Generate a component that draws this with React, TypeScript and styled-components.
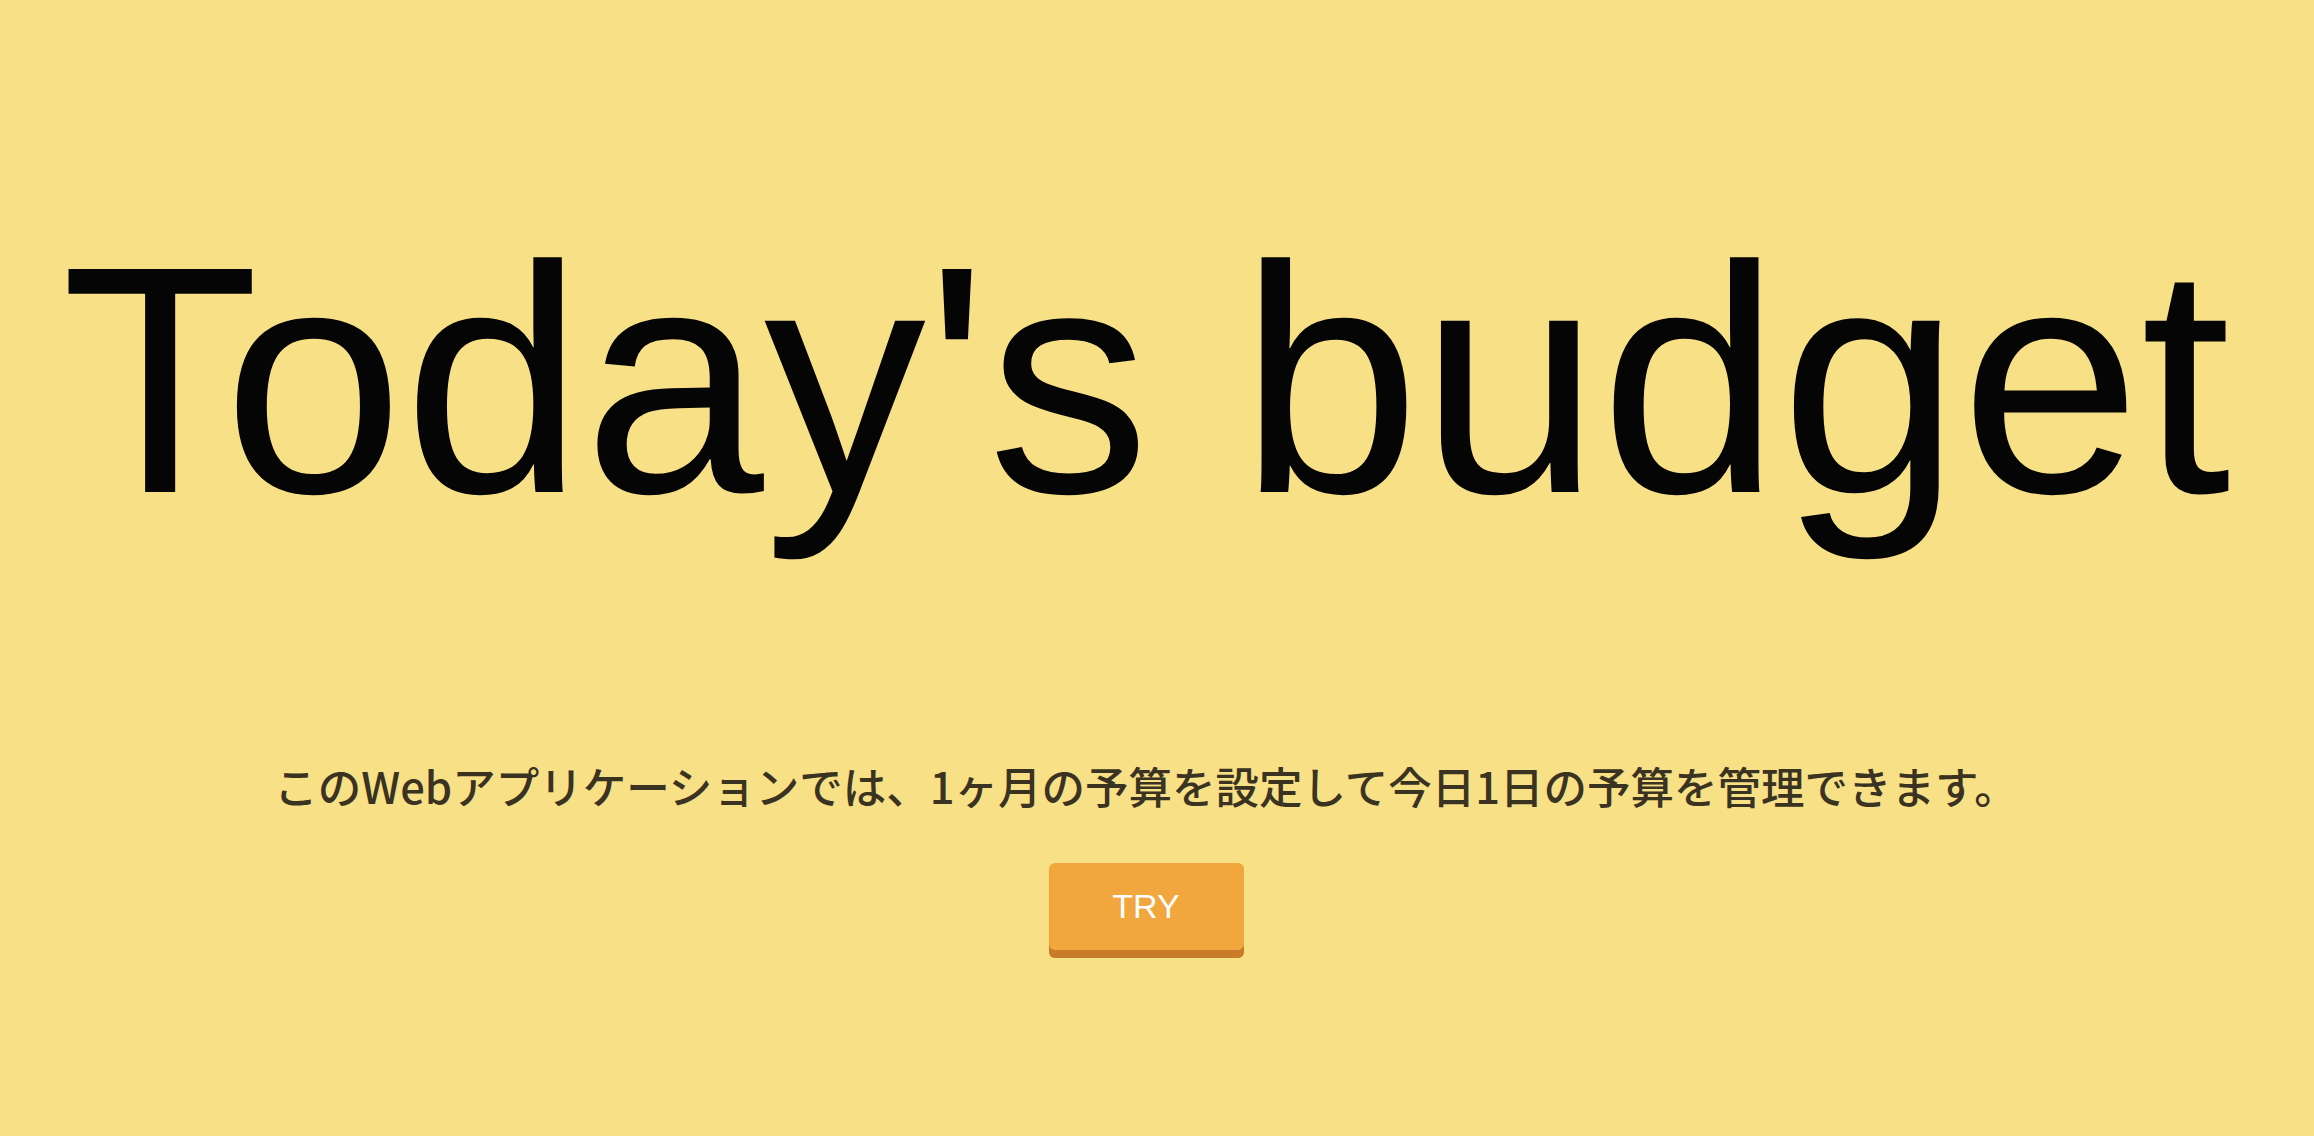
import React from "react";
import styled, { createGlobalStyle } from "styled-components";

const GlobalStyle = createGlobalStyle`
  html, body {
    margin: 0;
    padding: 0;
    background: #f8e086;
  }
  #root {
    min-height: 100vh;
  }
`;

const Page = styled.main`
  min-height: 1136px;
  box-sizing: border-box;
  background: #f8e086;
  display: flex;
  flex-direction: column;
  align-items: center;
  padding: 218px 22px 0 0;
`;

const Title = styled.h1`
  margin: 0;
  font-family: "Liberation Sans", Arial, sans-serif;
  font-weight: 400;
  font-size: 324px;
  line-height: 1;
  color: #050505;
  white-space: nowrap;
`;

const Lead = styled.p`
  margin: 222px 0 0 0;
  font-family: "Noto Sans CJK JP", "Noto Sans", sans-serif;
  font-weight: 500;
  font-size: 43.5px;
  line-height: 1;
  color: #3a3322;
  white-space: nowrap;
`;

const TryButton = styled.button`
  margin-top: 55px;
  width: 195px;
  height: 95px;
  box-sizing: border-box;
  border: none;
  border-radius: 6px;
  background: #f2a63e;
  box-shadow: inset 0 -8px 0 #c97b2a;
  color: #ffffff;
  font-family: "Liberation Sans", Arial, sans-serif;
  font-size: 34px;
  padding: 0 0 8px 0;
  cursor: pointer;
`;

export default function App() {
  return (
    <>
      <GlobalStyle />
      <Page>
        <Title>Today's budget</Title>
        <Lead>このWebアプリケーションでは、1ヶ月の予算を設定して今日1日の予算を管理できます。</Lead>
        <TryButton>TRY</TryButton>
      </Page>
    </>
  );
}
